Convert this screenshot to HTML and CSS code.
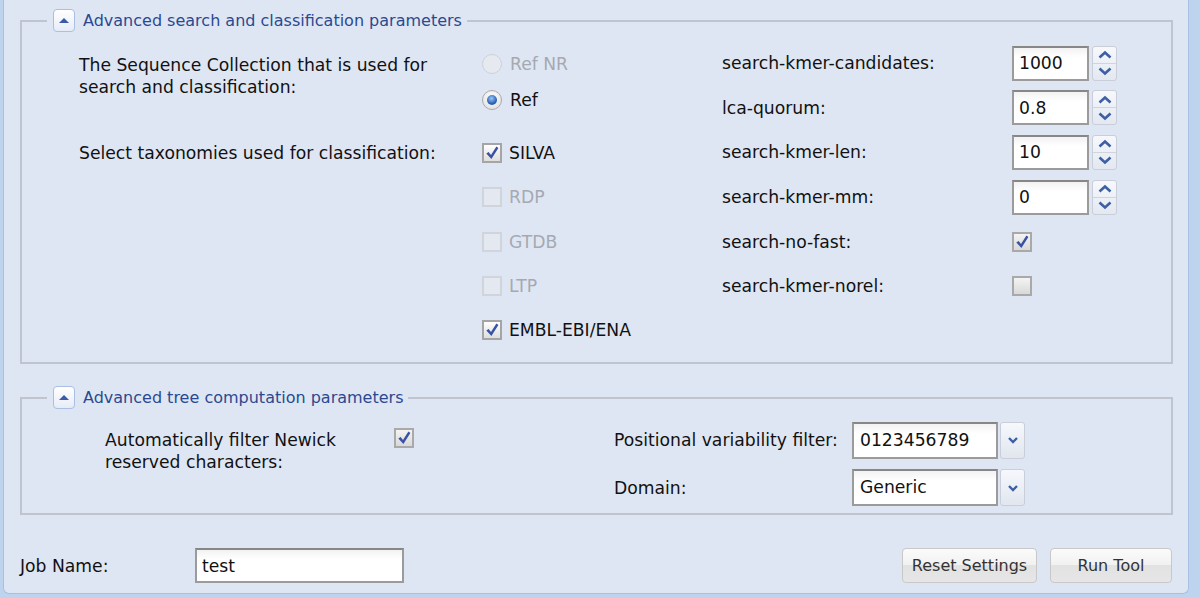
FILE: index.html
```html
<!DOCTYPE html>
<html lang="en">
<head>
    <meta charset="UTF-8">
    <meta name="viewport" content="width=device-width, initial-scale=1.0">
    <title>Tool Parameters</title>
    <link rel="stylesheet" href="styles.css">
</head>
<body>

    <div class="panel">

        <fieldset class="group">
            <legend>
                <button type="button" class="toggle" aria-label="Collapse">
                    <svg width="12" height="7" viewBox="0 0 12 7"><path d="M1 6 L6 1 L11 6 Z" fill="#3b5aa8"/></svg>
                </button>
                Advanced search and classification parameters
            </legend>

            <div class="search-body">
                <div class="left-params">
                    <div class="param">
                        <div class="param-label pad-radio">The Sequence Collection that is used for search and classification:</div>
                        <div class="options">
                            <label class="option radio-row disabled"><span class="radio"></span>Ref NR</label>
                            <label class="option radio-row"><span class="radio checked"></span>Ref</label>
                        </div>
                    </div>

                    <div class="param param-tax">
                        <div class="param-label pad-check">Select taxonomies used for classification:</div>
                        <div class="options">
                            <label class="option check-row"><span class="check checked"><svg width="16" height="16" viewBox="0 0 16 16"><path d="M2.3 8.6 L4.6 6.9 L7 10 L12.4 1.6 L14.4 2.9 L7.4 14 Z" fill="#3a52a3"/></svg></span>SILVA</label>
                            <label class="option check-row disabled"><span class="check"></span>RDP</label>
                            <label class="option check-row disabled"><span class="check"></span>GTDB</label>
                            <label class="option check-row disabled"><span class="check"></span>LTP</label>
                            <label class="option check-row"><span class="check checked"><svg width="16" height="16" viewBox="0 0 16 16"><path d="M2.3 8.6 L4.6 6.9 L7 10 L12.4 1.6 L14.4 2.9 L7.4 14 Z" fill="#3a52a3"/></svg></span>EMBL-EBI/ENA</label>
                        </div>
                    </div>
                </div>

                <div class="right-params">
                    <div class="rp-label">search-kmer-candidates:</div>
                    <div class="spin">
                        <input type="text" class="field spin-field" value="1000">
                        <span class="spin-buttons">
                            <span class="spin-btn"><svg width="14" height="9" viewBox="0 0 14 9"><path d="M1.5 7.5 L7 2.5 L12.5 7.5" fill="none" stroke="#3f5fa3" stroke-width="2.6"/></svg></span>
                            <span class="spin-btn"><svg width="14" height="9" viewBox="0 0 14 9"><path d="M1.5 1.5 L7 6.5 L12.5 1.5" fill="none" stroke="#3f5fa3" stroke-width="2.6"/></svg></span>
                        </span>
                    </div>

                    <div class="rp-label">lca-quorum:</div>
                    <div class="spin">
                        <input type="text" class="field spin-field" value="0.8">
                        <span class="spin-buttons">
                            <span class="spin-btn"><svg width="14" height="9" viewBox="0 0 14 9"><path d="M1.5 7.5 L7 2.5 L12.5 7.5" fill="none" stroke="#3f5fa3" stroke-width="2.6"/></svg></span>
                            <span class="spin-btn"><svg width="14" height="9" viewBox="0 0 14 9"><path d="M1.5 1.5 L7 6.5 L12.5 1.5" fill="none" stroke="#3f5fa3" stroke-width="2.6"/></svg></span>
                        </span>
                    </div>

                    <div class="rp-label">search-kmer-len:</div>
                    <div class="spin">
                        <input type="text" class="field spin-field" value="10">
                        <span class="spin-buttons">
                            <span class="spin-btn"><svg width="14" height="9" viewBox="0 0 14 9"><path d="M1.5 7.5 L7 2.5 L12.5 7.5" fill="none" stroke="#3f5fa3" stroke-width="2.6"/></svg></span>
                            <span class="spin-btn"><svg width="14" height="9" viewBox="0 0 14 9"><path d="M1.5 1.5 L7 6.5 L12.5 1.5" fill="none" stroke="#3f5fa3" stroke-width="2.6"/></svg></span>
                        </span>
                    </div>

                    <div class="rp-label">search-kmer-mm:</div>
                    <div class="spin">
                        <input type="text" class="field spin-field" value="0">
                        <span class="spin-buttons">
                            <span class="spin-btn"><svg width="14" height="9" viewBox="0 0 14 9"><path d="M1.5 7.5 L7 2.5 L12.5 7.5" fill="none" stroke="#3f5fa3" stroke-width="2.6"/></svg></span>
                            <span class="spin-btn"><svg width="14" height="9" viewBox="0 0 14 9"><path d="M1.5 1.5 L7 6.5 L12.5 1.5" fill="none" stroke="#3f5fa3" stroke-width="2.6"/></svg></span>
                        </span>
                    </div>

                    <div class="rp-label">search-no-fast:</div>
                    <div class="rp-control"><span class="check checked soft"><svg width="16" height="16" viewBox="0 0 16 16"><path d="M2.3 8.6 L4.6 6.9 L7 10 L12.4 1.6 L14.4 2.9 L7.4 14 Z" fill="#3a52a3"/></svg></span></div>

                    <div class="rp-label">search-kmer-norel:</div>
                    <div class="rp-control"><span class="check soft"></span></div>
                </div>
            </div>
        </fieldset>

        <fieldset class="group group-tree">
            <legend>
                <button type="button" class="toggle" aria-label="Collapse">
                    <svg width="12" height="7" viewBox="0 0 12 7"><path d="M1 6 L6 1 L11 6 Z" fill="#3b5aa8"/></svg>
                </button>
                Advanced tree computation parameters
            </legend>

            <div class="tree-body">
                <div class="tree-left">
                    <div class="tree-label">Automatically filter Newick reserved characters:</div>
                    <span class="check checked soft tree-check"><svg width="16" height="16" viewBox="0 0 16 16"><path d="M2.3 8.6 L4.6 6.9 L7 10 L12.4 1.6 L14.4 2.9 L7.4 14 Z" fill="#3a52a3"/></svg></span>
                </div>

                <div class="tree-right">
                    <div class="tr-label">Positional variability filter:</div>
                    <div class="select">
                        <span class="select-value">0123456789</span>
                        <span class="select-btn"><svg width="12" height="8" viewBox="0 0 12 8"><path d="M2 2 L6 6 L10 2" fill="none" stroke="#3f5fa3" stroke-width="2.4"/></svg></span>
                    </div>

                    <div class="tr-label">Domain:</div>
                    <div class="select">
                        <span class="select-value">Generic</span>
                        <span class="select-btn"><svg width="12" height="8" viewBox="0 0 12 8"><path d="M2 2 L6 6 L10 2" fill="none" stroke="#3f5fa3" stroke-width="2.4"/></svg></span>
                    </div>
                </div>
            </div>
        </fieldset>

        <div class="job-row">
            <label for="jobName" class="job-label">Job Name:</label>
            <input type="text" id="jobName" class="field job-field" value="test">
            <div class="actions">
                <button type="button" class="btn btn-reset">Reset Settings</button>
                <button type="button" class="btn btn-run">Run Tool</button>
            </div>
        </div>

    </div>

</body>
</html>
```

FILE: styles.css
```css
body {
    margin: 0;
    background-color: #bdd3ee;
    font-family: 'DejaVu Sans', sans-serif;
    font-size: 17.2px;
    color: #111;
}

.panel {
    width: 1153px;
    margin-left: 3px;
    padding: 9px 15px 10px 16px;
    background-color: #dfe6f3;
    border: 1px solid #a7bfe3;
    border-top: none;
    border-radius: 0 0 6px 6px;
}

/* collapsible parameter groups */
.group {
    margin: 0;
    padding: 0;
    border: 2px solid #bfc4ce;
}

.group legend {
    display: flex;
    align-items: center;
    gap: 8px;
    height: 23px;
    margin-left: 25px;
    padding: 0 5px 0 6px;
    color: #2b4990;
    font-size: 16px;
    line-height: 23px;
}

.toggle {
    width: 22px;
    height: 23px;
    padding: 0;
    display: flex;
    align-items: center;
    justify-content: center;
    background: linear-gradient(#ffffff, #e6ecf7);
    border: 1px solid #a9bfe3;
    border-radius: 4px;
}

.group-tree {
    margin-top: 22px;
}

.search-body {
    display: flex;
    padding: 13px 0 10px 57px;
}

.left-params {
    width: 643px;
    padding-top: 1px;
}

.param {
    display: flex;
}

.param-tax {
    margin-top: 13px;
}

.param-label {
    width: 403px;
    line-height: 22px;
}

.pad-radio { padding-top: 8px; }
.pad-check { padding-top: 11px; }

.options {
    display: flex;
    flex-direction: column;
}

.option {
    display: flex;
    align-items: center;
    gap: 8px;
}

.radio-row { height: 36px; }
.check-row { height: 44.25px; gap: 7px; }

.option.disabled {
    color: #a5a9b1;
}

/* radio buttons */
.radio {
    width: 18px;
    height: 18px;
    border-radius: 50%;
    border: 1px solid #a9a9a9;
    background: radial-gradient(circle at 50% 35%, #ffffff, #dcdcdc);
    display: flex;
    align-items: center;
    justify-content: center;
}

.disabled .radio {
    border-color: #cdd1d8;
    background: #e6e9ef;
}

.radio.checked::after {
    content: "";
    width: 10px;
    height: 10px;
    border-radius: 50%;
    background: radial-gradient(circle at 45% 35%, #9cc6f2, #2a64b8 60%, #1b4690);
}

/* checkboxes */
.check {
    width: 16px;
    height: 16px;
    border: 2px solid #a5a5a5;
    background: linear-gradient(#ffffff, #dedede);
    display: flex;
    align-items: center;
    justify-content: center;
}

.check.soft {
    border-color: #a9a9a9;
    background: linear-gradient(#f4f4f4, #d9d9d9);
}

.disabled .check {
    border-color: #d0d4db;
    background: #e4e8f0;
}

/* right side of the search group */
.right-params {
    margin-top: -4px;
    display: grid;
    grid-template-columns: 290px auto;
    grid-auto-rows: 44.6px;
    align-items: center;
}

.rp-control {
    display: flex;
}

.field {
    box-sizing: border-box;
    height: 35px;
    margin: 0;
    padding: 0 0 0 5px;
    font-family: inherit;
    font-size: 17.2px;
    color: #111;
    background: linear-gradient(#f2f2f2, #ffffff 30%);
    border: 2px solid #9b9b9b;
    border-top-color: #878787;
    outline: none;
}

.spin {
    display: flex;
    gap: 3px;
}

.spin-field {
    width: 77px;
}

.spin-buttons {
    width: 25px;
    height: 35px;
    display: flex;
    flex-direction: column;
    box-sizing: border-box;
    border: 1px solid #c9ced8;
    border-radius: 3px;
    background: linear-gradient(#f6f8fc, #e3e8f1);
}

.spin-btn {
    flex: 1;
    display: flex;
    align-items: center;
    justify-content: center;
}

.spin-btn + .spin-btn {
    border-top: 1px solid #cfd4dd;
}

/* tree group */
.tree-body {
    display: flex;
    padding: 7px 0 2px 83px;
}

.tree-left {
    width: 509px;
    display: flex;
    align-items: flex-start;
}

.tree-label {
    width: 289px;
    padding-top: 13px;
    line-height: 22px;
}

.tree-check {
    margin-top: 12px;
}

.tree-right {
    display: grid;
    grid-template-columns: 238px auto;
    grid-auto-rows: 47.5px;
    align-items: center;
}

.select {
    display: flex;
    gap: 2px;
}

.select-value {
    box-sizing: border-box;
    width: 146px;
    height: 37px;
    padding-left: 6px;
    line-height: 33px;
    background: linear-gradient(#f2f2f2, #ffffff 30%);
    border: 2px solid #9b9b9b;
    border-top-color: #878787;
}

.select-btn {
    box-sizing: border-box;
    width: 25px;
    height: 37px;
    display: flex;
    align-items: center;
    justify-content: center;
    border: 1px solid #c9ced8;
    border-radius: 3px;
    background: linear-gradient(#f6f8fc, #e1e6ef);
}

/* job name and actions */
.job-row {
    display: flex;
    align-items: center;
    margin-top: 33px;
}

.job-label {
    width: 175px;
}

.job-field {
    width: 209px;
}

.actions {
    margin-left: auto;
    margin-right: 1px;
    display: flex;
    gap: 13px;
}

.btn {
    height: 35px;
    padding: 0;
    font-family: inherit;
    font-size: 16px;
    color: #333;
    border: 1px solid #c8c8c8;
    border-radius: 4px;
    background: linear-gradient(#fbfbfb, #f1f1f1 50%, #e2e2e2 50%, #e6e6e6);
    cursor: pointer;
}

.btn-reset { width: 135px; }
.btn-run { width: 122px; }
```
